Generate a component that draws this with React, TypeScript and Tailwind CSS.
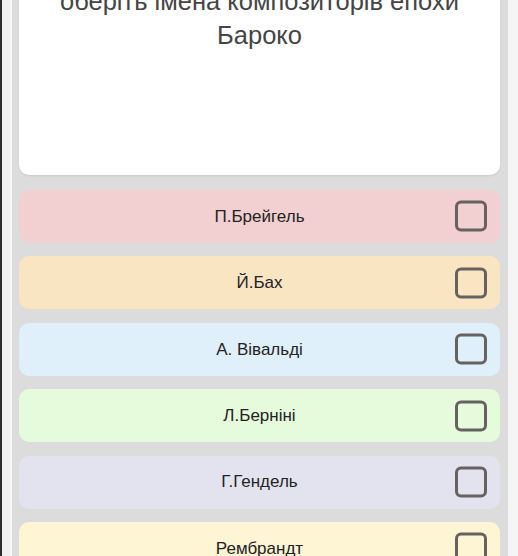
const options = [
  { label: "П.Брейгель", bg: "bg-[#f2cfd0]" },
  { label: "Й.Бах", bg: "bg-[#fae5c3]" },
  { label: "А. Вівальді", bg: "bg-[#dff0fb]" },
  { label: "Л.Берніні", bg: "bg-[#e5fbdc]" },
  { label: "Г.Гендель", bg: "bg-[#e3e3f0]" },
  { label: "Рембрандт", bg: "bg-[#fdf5d4]" },
];

function Option({ label, bg }: { label: string; bg: string }) {
  return (
    <div className={`relative flex h-[53px] shrink-0 items-center justify-center rounded-[10px] ${bg}`}>
      <span className="text-[17px] text-[#232323]">{label}</span>
      <div className="absolute right-[13px] top-1/2 h-[31px] w-[32px] -translate-y-1/2 rounded-[6px] border-[3px] border-[#676260]" />
    </div>
  );
}

export default function App() {
  return (
    <div
      className="flex h-[556px] w-[518px] overflow-hidden bg-[#f3f3f3]"
      style={{ fontFamily: '"Liberation Sans", Arial, sans-serif' }}
    >
      <div className="w-[2px] shrink-0 bg-[#2b2b2b]" />
      <div className="w-[8px] shrink-0 bg-[#f0f0f0]" />
      <div className="w-[2px] shrink-0 bg-[#f7f7f7]" />
      <div className="flex w-[496px] shrink-0 flex-col gap-[13.4px] bg-[#dcdcdc] pl-[7px] pr-[8px]">
        <div className="mb-[1.6px] mt-[-40px] flex h-[215px] shrink-0 flex-col items-center rounded-[10px] bg-white pt-[24px] shadow-[0_1px_2px_rgba(0,0,0,0.08)]">
          <p className="text-center text-[25.5px] leading-[34px] text-[#454545]">
            оберіть імена композиторів епохи
            <br />
            Бароко
          </p>
        </div>
        {options.map((o) => (
          <Option key={o.label} label={o.label} bg={o.bg} />
        ))}
      </div>
      <div className="w-[10px] shrink-0 bg-[#f5f5f5]" />
    </div>
  );
}
